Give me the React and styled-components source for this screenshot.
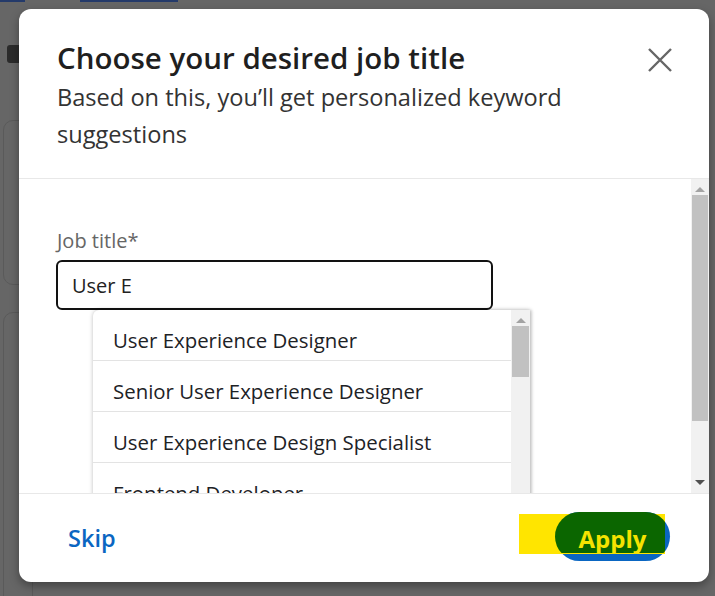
import styled, { createGlobalStyle } from 'styled-components'

const GlobalStyle = createGlobalStyle`
  html, body {
    margin: 0;
    padding: 0;
    background: #666666;
  }
  * { box-sizing: border-box; }
`

const Page = styled.div`
  position: relative;
  width: 715px;
  height: 596px;
  overflow: hidden;
  background: #666666;
  font-family: "Open Sans", "Noto Sans", sans-serif;
`

const TopStrip = styled.div`
  display: flex;
  gap: 55px;
  height: 2px;
`

const StripPiece = styled.div`
  width: ${props => props.w}px;
  background: #243a6a;
`

const BackColumn = styled.div`
  display: flex;
  flex-direction: column;
  padding: 43px 0 0 3px;
`

const InfoIcon = styled.div`
  width: 16px;
  height: 18px;
  margin-left: 4px;
  border-radius: 3px;
  background: #2b2b2b;
`

const BackCard = styled.div`
  width: 30px;
  height: ${props => props.h}px;
  margin-top: ${props => props.gap}px;
  border: 1px solid #5a5a5a;
  border-radius: 10px;
  flex-shrink: 0;
`

const Modal = styled.div`
  position: absolute;
  left: 19px;
  top: 9px;
  width: 690px;
  height: 573px;
  background: #fff;
  border-radius: 12px;
  box-shadow: 0 4px 10px rgba(0, 0, 0, 0.35);
  display: flex;
  flex-direction: column;
  overflow: hidden;
`

const Header = styled.div`
  position: relative;
  height: 170px;
  padding: 28px 80px 0 38px;
  border-bottom: 1px solid #e8e8e8;
  flex-shrink: 0;
`

const Title = styled.h2`
  margin: 0;
  font-size: 29.5px;
  font-weight: 600;
  line-height: 42px;
  color: #1f1f1f;
`

const Subtitle = styled.p`
  margin: 0;
  font-size: 23.6px;
  line-height: 37px;
  color: #333;
`

const CloseButton = styled.button`
  position: absolute;
  top: 38px;
  right: 36px;
  width: 26px;
  height: 26px;
  padding: 0;
  border: none;
  background: none;
  display: flex;
  align-items: center;
  justify-content: center;
`

const Body = styled.div`
  flex: 1;
  display: flex;
  overflow: hidden;
`

const Content = styled.div`
  flex: 1;
  padding: 49px 0 0 37px;
`

const Label = styled.div`
  font-size: 20px;
  line-height: 26px;
  color: #666;
  margin-bottom: 6px;
  padding-left: 1px;
`

const Field = styled.div`
  position: relative;
  width: 437px;
`

const Input = styled.div`
  height: 50px;
  border: 2.5px solid #121212;
  border-radius: 6px;
  padding-left: 14px;
  display: flex;
  align-items: center;
  font-size: 20px;
  color: #222;
`

const Menu = styled.div`
  position: absolute;
  top: 50px;
  left: 37px;
  width: 437px;
  height: 240px;
  background: #fff;
  border-radius: 6px 0 0 0;
  box-shadow: 0 0 4px rgba(0, 0, 0, 0.25), 2px 0 3px rgba(0, 0, 0, 0.12);
  display: flex;
`

const MenuList = styled.ul`
  flex: 1;
  margin: 0;
  padding: 0;
  list-style: none;
`

const MenuItem = styled.li`
  height: 51px;
  padding: 17px 0 0 20px;
  border-bottom: 1px solid #e3e3e3;
  font-size: 20.4px;
  line-height: 26px;
  color: #1d2226;
  white-space: nowrap;
`

const Scrollbar = styled.div`
  width: ${props => props.w || 18}px;
  background: #f1f1f1;
  display: flex;
  flex-direction: column;
  align-items: center;
  padding: 0 1px;
`

const Arrow = styled.div`
  width: 0;
  height: 0;
  margin: ${props => props.down ? 'auto 0 8px' : '8px 0 3px'};
  border-left: 5px solid transparent;
  border-right: 5px solid transparent;
  ${props => props.down
    ? 'border-top: 5px solid #505050;'
    : 'border-bottom: 5px solid #a3a3a3;'}
`

const Thumb = styled.div`
  width: 100%;
  height: ${props => props.h}px;
  background: #c1c1c1;
`

const Footer = styled.div`
  height: 89px;
  flex-shrink: 0;
  border-top: 1px solid #e8e8e8;
  display: flex;
  align-items: center;
  justify-content: space-between;
  padding: 0 39px 0 49px;
`

const SkipButton = styled.button`
  border: none;
  background: none;
  padding: 0;
  font-family: inherit;
  font-size: 23.5px;
  font-weight: 600;
  color: #0a66c2;
`

const ApplyButton = styled.button`
  position: relative;
  width: 115px;
  height: 49px;
  margin-top: -3px;
  border: none;
  padding: 0;
  border-radius: 25px;
  background: #0a66c2;
  font-family: inherit;
  font-size: 24px;
  font-weight: 700;
  color: #f5e300;
  isolation: isolate;

  &::before {
    content: '';
    position: absolute;
    left: -36px;
    top: 2px;
    width: 146px;
    height: 40px;
    background: #ffe500;
    z-index: -1;
  }
`

const ApplyFill = styled.span`
  position: absolute;
  inset: 0;
  border-radius: 25px;
  overflow: hidden;

  &::after {
    content: '';
    position: absolute;
    left: 0;
    top: 0;
    width: 110px;
    height: 41px;
    background: #0b6600;
  }
`

const ApplyText = styled.span`
  position: relative;
  z-index: 1;
  display: block;
  margin-top: 3px;
  margin-left: 0;
`

const suggestions = [
  'User Experience Designer',
  'Senior User Experience Designer',
  'User Experience Design Specialist',
  'Frontend Developer',
]

export default function App() {
  return (
    <Page>
      <GlobalStyle />
      <TopStrip>
        <StripPiece w={25} />
        <StripPiece w={98} />
      </TopStrip>
      <BackColumn>
        <InfoIcon />
        <BackCard h={165} gap={57} />
        <BackCard h={400} gap={27} />
      </BackColumn>

      <Modal>
        <Header>
          <Title>Choose your desired job title</Title>
          <Subtitle>Based on this, you’ll get personalized keyword suggestions</Subtitle>
          <CloseButton aria-label="Close">
            <svg width="26" height="26" viewBox="0 0 26 26">
              <path d="M2 2 L24 24 M24 2 L2 24" stroke="#666" strokeWidth="2.4" fill="none" />
            </svg>
          </CloseButton>
        </Header>

        <Body>
          <Content>
            <Label>Job title*</Label>
            <Field>
              <Input>User E</Input>
              <Menu>
                <MenuList>
                  {suggestions.map(s => (
                    <MenuItem key={s}>{s}</MenuItem>
                  ))}
                </MenuList>
                <Scrollbar w={19}>
                  <Arrow />
                  <Thumb h={51} />
                </Scrollbar>
              </Menu>
            </Field>
          </Content>
          <Scrollbar>
            <Arrow />
            <Thumb h={226} />
            <Arrow down />
          </Scrollbar>
        </Body>

        <Footer>
          <SkipButton>Skip</SkipButton>
          <ApplyButton>
            <ApplyFill />
            <ApplyText>Apply</ApplyText>
          </ApplyButton>
        </Footer>
      </Modal>
    </Page>
  )
}
